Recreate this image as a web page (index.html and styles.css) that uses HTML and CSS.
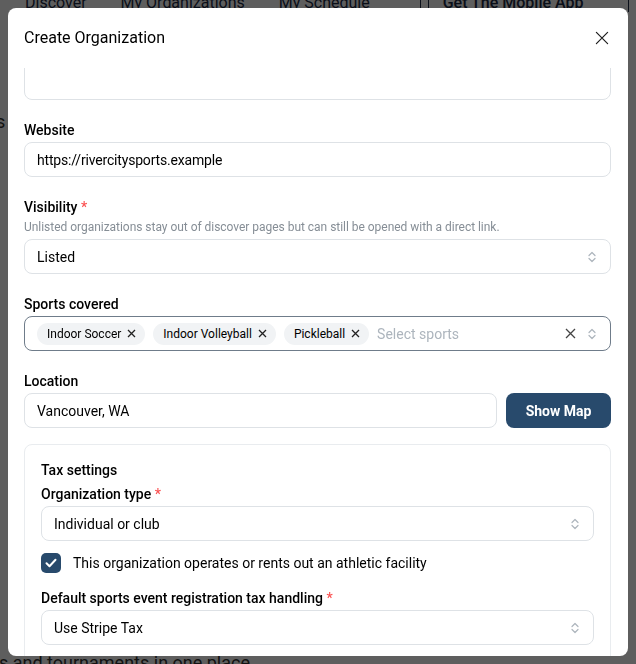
FILE: index.html
```html
<!DOCTYPE html>
<html lang="en">
  <head>
    <meta charset="UTF-8" />
    <meta name="viewport" content="width=device-width, initial-scale=1.0" />
    <title>Create Organization</title>
    <link rel="stylesheet" href="styles.css">
  </head>
  <body>
    <div class="page">
      <nav class="topnav">
        <a class="navlink">Discover</a>
        <a class="navlink">My Organizations</a>
        <a class="navlink">My Schedule</a>
        <a class="navlink app"><span class="appicon"></span>Get The Mobile App</a>
        <span class="navsep"></span>
      </nav>
      <p class="side">s</p>
      <p class="tagline">s and tournaments in one place.</p>
    </div>

    <div class="overlay"></div>

    <div class="modal">
      <header class="modal-header">
        <h2 class="modal-title">Create Organization</h2>
        <button class="close" aria-label="Close">
          <svg width="14" height="14" viewBox="0 0 15 15"><path d="M1.5 1.5l12 12M13.5 1.5l-12 12" stroke="#222" stroke-width="1.3" fill="none" stroke-linecap="round"/></svg>
        </button>
      </header>

      <div class="modal-body">
        <div class="form">
          <div class="field">
            <div class="textarea"></div>
          </div>

          <div class="field">
            <label class="label">Website</label>
            <div class="input url">https://rivercitysports.example</div>
          </div>

          <div class="field">
            <label class="label">Visibility <span class="req">*</span></label>
            <p class="desc">Unlisted organizations stay out of discover pages but can still be opened with a direct link.</p>
            <div class="input select">
              <span>Listed</span>
              <svg class="chev" width="8" height="12" viewBox="0 0 8 12"><path d="M1 4.5L4 1.5 7 4.5M1 7.5L4 10.5 7 7.5" stroke="#adb5bd" stroke-width="1.2" fill="none" stroke-linecap="round" stroke-linejoin="round"/></svg>
            </div>
          </div>

          <div class="field">
            <label class="label">Sports covered</label>
            <div class="input multi">
              <span class="pill">Indoor Soccer<svg width="9" height="9" viewBox="0 0 9 9"><path d="M1 1l7 7M8 1L1 8" stroke="#222" stroke-width="1.3" fill="none"/></svg></span>
              <span class="pill">Indoor Volleyball<svg width="9" height="9" viewBox="0 0 9 9"><path d="M1 1l7 7M8 1L1 8" stroke="#222" stroke-width="1.3" fill="none"/></svg></span>
              <span class="pill">Pickleball<svg width="9" height="9" viewBox="0 0 9 9"><path d="M1 1l7 7M8 1L1 8" stroke="#222" stroke-width="1.3" fill="none"/></svg></span>
              <span class="placeholder">Select sports</span>
              <svg class="clear" width="11" height="11" viewBox="0 0 11 11"><path d="M1 1l9 9M10 1L1 10" stroke="#444" stroke-width="1.3" fill="none"/></svg>
              <svg class="chev" width="8" height="12" viewBox="0 0 8 12"><path d="M1 4.5L4 1.5 7 4.5M1 7.5L4 10.5 7 7.5" stroke="#adb5bd" stroke-width="1.2" fill="none" stroke-linecap="round" stroke-linejoin="round"/></svg>
            </div>
          </div>

          <div class="field">
            <label class="label">Location</label>
            <div class="row">
              <div class="input grow">Vancouver, WA</div>
              <button class="btn">Show Map</button>
            </div>
          </div>

          <div class="taxbox">
            <h3 class="taxtitle">Tax settings</h3>
            <div class="field">
              <label class="label">Organization type <span class="req">*</span></label>
              <div class="input select">
                <span>Individual or club</span>
                <svg class="chev" width="8" height="12" viewBox="0 0 8 12"><path d="M1 4.5L4 1.5 7 4.5M1 7.5L4 10.5 7 7.5" stroke="#adb5bd" stroke-width="1.2" fill="none" stroke-linecap="round" stroke-linejoin="round"/></svg>
              </div>
            </div>
            <div class="check">
              <span class="box">
                <svg width="12" height="10" viewBox="0 0 12 10"><path d="M1.5 5.2l3 3 6-6.4" stroke="#fff" stroke-width="2" fill="none" stroke-linecap="round" stroke-linejoin="round"/></svg>
              </span>
              <span>This organization operates or rents out an athletic facility</span>
            </div>
            <div class="field">
              <label class="label">Default sports event registration tax handling <span class="req">*</span></label>
              <div class="input select">
                <span>Use Stripe Tax</span>
                <svg class="chev" width="8" height="12" viewBox="0 0 8 12"><path d="M1 4.5L4 1.5 7 4.5M1 7.5L4 10.5 7 7.5" stroke="#adb5bd" stroke-width="1.2" fill="none" stroke-linecap="round" stroke-linejoin="round"/></svg>
              </div>
            </div>
            <div class="field">
              <label class="label">Tax category</label>
              <div class="input">General</div>
            </div>
          </div>
        </div>
      </div>
    </div>
  </body>
</html>
```

FILE: styles.css
```css
* {
  box-sizing: border-box;
  margin: 0;
  padding: 0;
}
body {
  font-family: Roboto, "Liberation Sans", Arial, sans-serif;
  color: #000;
  background: #fff;
  height: 664px;
  overflow: hidden;
}
.page {
  height: 664px;
  display: flex;
  flex-direction: column;
}
.topnav {
  display: flex;
  align-items: center;
  margin-top: -11px;
  height: 26px;
  padding-left: 25px;
  gap: 34px;
  font-size: 16px;
  color: #1b2a44;
}
.navlink.app {
  display: flex;
  align-items: center;
  gap: 14px;
  margin-left: 16px;
  font-weight: 500;
}
.appicon {
  width: 9px;
  height: 18px;
  border: 1.5px solid #1b2a44;
  border-radius: 2px;
}
.navsep {
  width: 1px;
  height: 20px;
  background: #1b2a44;
  margin-left: 10px;
}
.side {
  margin-top: 96px;
  margin-left: -4px;
  font-size: 18px;
  color: #333;
}
.tagline {
  margin-top: auto;
  margin-left: -1px;
  margin-bottom: -12px;
  font-size: 18px;
  line-height: 26px;
  color: #333;
}
.overlay {
  position: fixed;
  inset: 0;
  background: rgba(0, 0, 0, 0.63);
}
.modal {
  position: fixed;
  top: 8px;
  left: 8px;
  width: 620px;
  height: 648px;
  background: #fff;
  border-radius: 8px;
  overflow: hidden;
  display: flex;
  flex-direction: column;
}
.modal-header {
  height: 60px;
  flex: none;
  display: flex;
  align-items: center;
  justify-content: space-between;
  padding: 0 15px 0 16px;
}
.modal-title {
  font-size: 16px;
  font-weight: 400;
  line-height: 1;
}
.close {
  width: 22px;
  height: 22px;
  border: none;
  background: none;
  display: flex;
  align-items: center;
  justify-content: center;
}
.modal-body {
  flex: 1;
  overflow: hidden;
  padding: 0 17px 0 16px;
}
.form {
  margin-top: -48px;
  display: flex;
  flex-direction: column;
  gap: 20px;
}
.textarea {
  height: 80px;
  border: 1px solid #dee2e6;
  border-radius: 8px;
}
.label {
  display: block;
  font-size: 14px;
  font-weight: 500;
  line-height: 20px;
  margin-bottom: 2px;
}
.req {
  color: #fa5252;
}
.desc {
  font-size: 12px;
  line-height: 16px;
  color: #868e96;
  margin-bottom: 4px;
  letter-spacing: -0.03px;
}
.input {
  height: 35px;
  border: 1px solid #dee2e6;
  border-radius: 8px;
  padding: 0 12px;
  font-size: 14px;
  display: flex;
  align-items: center;
}
.url {
  letter-spacing: -0.18px;
}
.select {
  justify-content: space-between;
  padding-right: 14px;
}
.multi {
  border-color: #6f7c8a;
  gap: 8px;
  padding-right: 14px;
}
.pill {
  height: 22px;
  padding: 0 9px 0 10px;
  background: #f1f3f5;
  border-radius: 11px;
  font-size: 12px;
  display: flex;
  align-items: center;
  gap: 6px;
}
.placeholder {
  flex: 1;
  color: #adb5bd;
}
.clear {
  margin-right: 4px;
}
.row {
  display: flex;
  gap: 9px;
}
.grow {
  flex: 1;
}
.btn {
  width: 105px;
  height: 35px;
  border: none;
  border-radius: 8px;
  background: #284a6c;
  color: #fff;
  font-family: inherit;
  font-size: 14px;
  font-weight: 700;
}
.taxbox {
  margin-top: -4px;
  border: 1px solid #e9ecef;
  border-radius: 8px;
  padding: 15px 16px 16px;
  display: flex;
  flex-direction: column;
  gap: 12px;
}
.taxtitle {
  font-size: 14px;
  font-weight: 500;
  line-height: 20px;
  margin-bottom: -8px;
}
.check {
  display: flex;
  align-items: center;
  gap: 12px;
  font-size: 14px;
  line-height: 20px;
  margin-bottom: 3px;
}
.box {
  width: 20px;
  height: 20px;
  border-radius: 5px;
  background: #284a6c;
  display: flex;
  align-items: center;
  justify-content: center;
}
```
